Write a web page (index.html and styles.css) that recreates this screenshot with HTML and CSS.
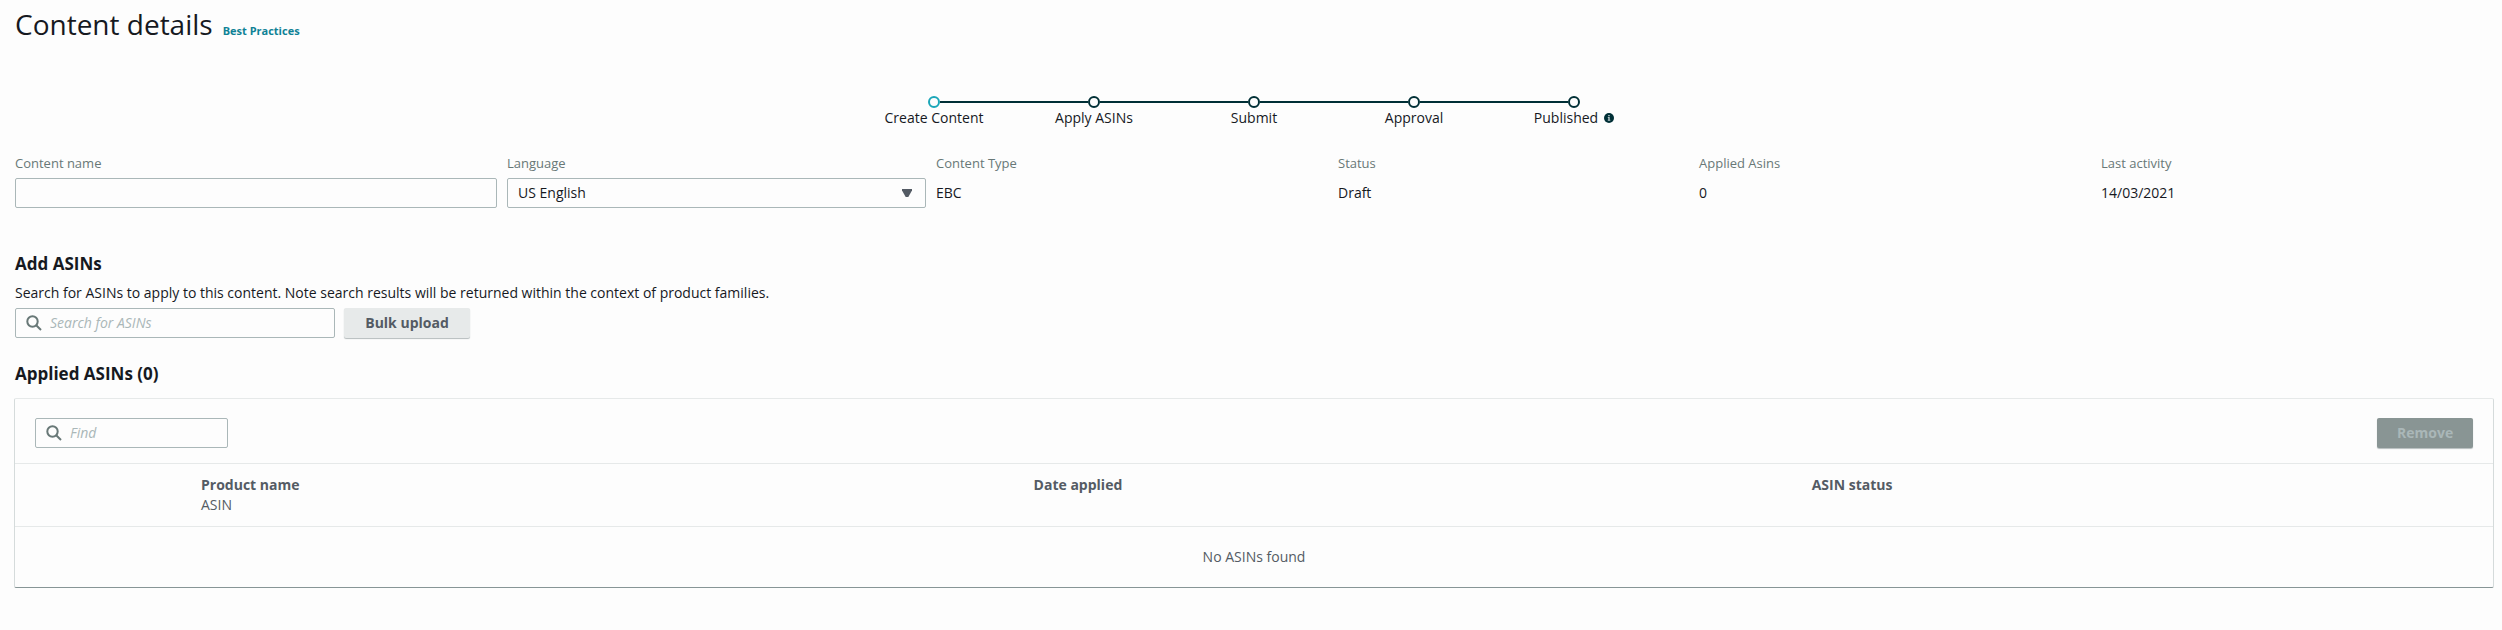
FILE: index.html
```
<!DOCTYPE html>
<html lang="en">
<head>
    <meta charset="UTF-8">
    <meta name="viewport" content="width=device-width, initial-scale=1.0">
    <title>Content details</title>
    <link rel="stylesheet" href="styles.css">
</head>
<body>
    <main>
        <header class="page-header">
            <h1>Content details</h1>
            <a href="#">Best Practices</a>
        </header>

        <ol class="steps">
            <li class="step active">Create Content</li>
            <li class="step">Apply ASINs</li>
            <li class="step">Submit</li>
            <li class="step">Approval</li>
            <li class="step">
                <span class="step-label">Published
                    <svg class="info-icon" viewBox="0 0 10 10" aria-label="Info">
                        <circle cx="5" cy="5" r="5" fill="#002f36"/>
                        <path d="M4.2 2h1.5v1.2H4.2zM3.8 4.1h1.9v2.7h.6v.9H3.8v-.9h.5V5h-.5z" fill="#b8c8ca"/>
                    </svg>
                </span>
            </li>
        </ol>

        <section class="details">
            <div class="field">
                <label for="content-name">Content name</label>
                <input type="text" id="content-name">
            </div>
            <div class="field">
                <label for="language">Language</label>
                <div class="select">
                    <select id="language">
                        <option>US English</option>
                    </select>
                    <svg class="arrow" viewBox="0 0 10 8"><path d="M0 0h10v1.5L6.3 8H3.7L0 1.5z" fill="#545b64"/></svg>
                </div>
            </div>
            <div class="field">
                <span class="name">Content Type</span>
                <span class="value">EBC</span>
            </div>
            <div class="field">
                <span class="name">Status</span>
                <span class="value">Draft</span>
            </div>
            <div class="field">
                <span class="name">Applied Asins</span>
                <span class="value">0</span>
            </div>
            <div class="field">
                <span class="name">Last activity</span>
                <span class="value">14/03/2021</span>
            </div>
        </section>

        <section class="add-asins">
            <h2>Add ASINs</h2>
            <p>Search for ASINs to apply to this content. Note search results will be returned within the context of product families.</p>
            <div class="add-row">
                <label class="search">
                    <svg viewBox="0 0 16 16"><circle cx="6.5" cy="6.5" r="5.2"/><path d="M10.2 10.2l4.8 4.8"/></svg>
                    <input type="text" placeholder="Search for ASINs" aria-label="Search for ASINs">
                </label>
                <button class="bulk-button" type="button">Bulk upload</button>
            </div>
        </section>

        <section class="applied-asins">
            <h2>Applied ASINs (0)</h2>
            <div class="card">
                <div class="toolbar">
                    <label class="search find">
                        <svg viewBox="0 0 16 16"><circle cx="6.5" cy="6.5" r="5.2"/><path d="M10.2 10.2l4.8 4.8"/></svg>
                        <input type="text" placeholder="Find" aria-label="Find">
                    </label>
                    <button class="remove-button" type="button" disabled>Remove</button>
                </div>
                <table>
                    <colgroup>
                        <col class="col-check">
                        <col class="col-product">
                        <col class="col-date">
                        <col>
                    </colgroup>
                    <thead>
                        <tr>
                            <td></td>
                            <th>Product name<span>ASIN</span></th>
                            <th>Date applied</th>
                            <th>ASIN status</th>
                        </tr>
                    </thead>
                    <tbody>
                        <tr>
                            <td class="empty" colspan="4">No ASINs found</td>
                        </tr>
                    </tbody>
                </table>
            </div>
        </section>
    </main>
</body>
</html>
```

FILE: styles.css
```
*, *::before, *::after {
    box-sizing: border-box;
}

body {
    margin: 0;
    background-color: #fdfdfd;
    color: #16191f;
    font-family: "Open Sans", "Noto Sans", sans-serif;
    font-size: 14px;
    line-height: 20px;
}

main {
    padding: 4px 9px 40px 15px;
}

h1, h2, p, ol {
    margin: 0;
    padding: 0;
}

h1 {
    font-size: 28px;
    font-weight: 400;
    line-height: 40px;
}

h2 {
    font-size: 17px;
    font-weight: 700;
    line-height: 24px;
}

input, select, button {
    font: inherit;
    color: inherit;
}

.page-header {
    display: flex;
    align-items: baseline;
    gap: 10px;
}

.page-header a {
    color: #0f8296;
    font-size: 11px;
    font-weight: 700;
    text-decoration: none;
}

/* progress steps */
.steps {
    display: flex;
    justify-content: center;
    margin-top: 52px;
    list-style: none;
}

.step {
    position: relative;
    display: flex;
    flex-direction: column;
    align-items: center;
    width: 160px;
    white-space: nowrap;
}

.step::before {
    content: "";
    width: 12px;
    height: 12px;
    border: 2px solid #002f36;
    border-radius: 50%;
}

.step.active::before {
    border-color: #1ba6b8;
}

.step + .step::after {
    content: "";
    position: absolute;
    top: 5px;
    right: calc(50% + 6px);
    width: calc(100% - 12px);
    height: 2px;
    background-color: #002f36;
}

.step-label {
    display: flex;
    align-items: center;
    gap: 6px;
}

.info-icon {
    width: 10px;
    height: 10px;
}

/* content details */
.details {
    display: grid;
    grid-template-columns: 482fr 419fr 392fr 351fr 392fr 392fr;
    gap: 10px;
    margin-top: 25px;
}

.field {
    display: flex;
    flex-direction: column;
    gap: 5px;
}

.field label, .name {
    color: #687877;
    font-size: 13px;
}

.field input, .select select {
    width: 100%;
    height: 30px;
    padding: 0 10px;
    border: 1px solid #aab7b8;
    border-radius: 2px;
    background-color: #fdfdfd;
}

.value {
    line-height: 30px;
}

.select {
    position: relative;
}

.select select {
    appearance: none;
}

.arrow {
    position: absolute;
    top: 11px;
    right: 14px;
    width: 10px;
    height: 8px;
    pointer-events: none;
}

/* add asins */
.add-asins {
    margin-top: 44px;
}

.add-asins p {
    margin-top: 7px;
}

.add-row {
    display: flex;
    gap: 9px;
    margin-top: 5px;
}

.search {
    display: flex;
    align-items: center;
    gap: 8px;
    width: 320px;
    height: 30px;
    padding: 0 10px;
    border: 1px solid #aab7b8;
    border-radius: 2px;
}

.search svg {
    flex: none;
    width: 16px;
    height: 16px;
    fill: none;
    stroke: #687877;
    stroke-width: 2;
}

.search input {
    flex: 1;
    min-width: 0;
    padding: 0;
    border: none;
    outline: none;
    background: none;
}

.search input::placeholder {
    color: #aab7b8;
    font-style: italic;
}

.bulk-button, .remove-button {
    height: 30px;
    padding: 0 20px;
    border: none;
    border-radius: 2px;
    font-weight: 700;
}

.bulk-button {
    width: 126px;
    background-color: #e7eaea;
    color: #545b64;
    box-shadow: 0 1px 1px #b5bcbd;
}

.remove-button {
    width: 96px;
    background-color: #899594;
    color: #aab7b8;
    box-shadow: 0 1px 1px #b5bcbd;
}

/* applied asins */
.applied-asins {
    margin-top: 24px;
}

.card {
    margin: 12px -1px 0;
    border: 1px solid #d5dbdb;
    border-top-color: #e6e9e9;
    border-bottom-color: #879596;
    border-radius: 2px;
}

.toolbar {
    display: flex;
    justify-content: space-between;
    padding: 19px 20px 15px;
}

.find {
    width: 193px;
}

table {
    width: 100%;
    table-layout: fixed;
    border-collapse: collapse;
    color: #545b64;
}

.col-check {
    width: 6.7%;
}

.col-product {
    width: 33.6%;
}

.col-date {
    width: 31.4%;
}

th, td {
    padding: 11px 20px;
    border-top: 1px solid #e6e9e9;
    text-align: left;
    vertical-align: top;
}

th span {
    display: block;
    font-weight: 400;
}

.empty {
    padding: 20px;
    text-align: center;
}
```
